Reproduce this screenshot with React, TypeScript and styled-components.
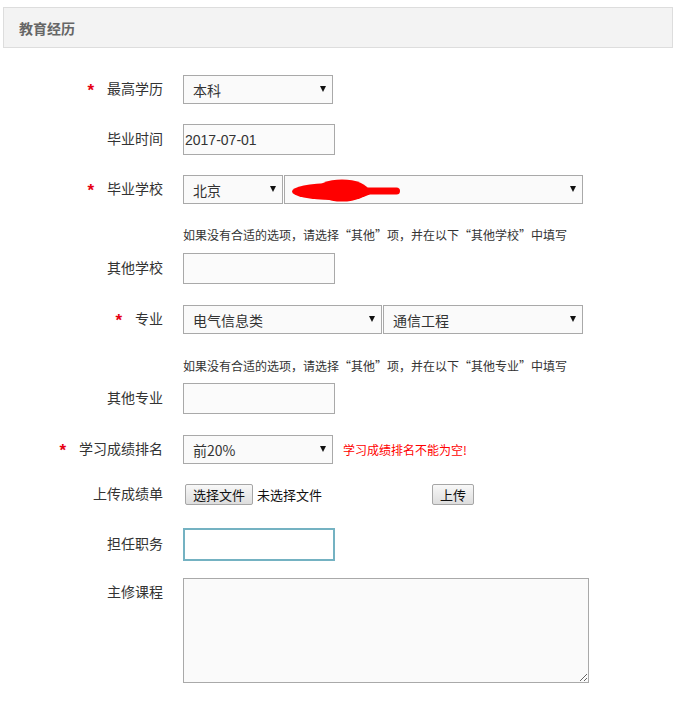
import React from "react";
import styled, { createGlobalStyle } from "styled-components";

const GlobalStyle = createGlobalStyle`
  html, body {
    margin: 0;
    padding: 0;
    background: #ffffff;
  }
  body {
    font-family: "Noto Sans CJK SC", "Liberation Sans", sans-serif;
    color: #333333;
  }
`;

const Page = styled.div`
  width: 679px;
  padding: 7px 6px 20px 3px;
  box-sizing: border-box;
`;

const Header = styled.div`
  height: 41px;
  box-sizing: border-box;
  border: 1px solid #dddddd;
  background: #f3f3f3;
  display: flex;
  align-items: center;
  padding-left: 15px;
`;

const Title = styled.h3`
  margin: 0;
  font-size: 14px;
  font-weight: bold;
  color: #666666;
`;

const Form = styled.div`
  display: flex;
  flex-flow: column;
  padding-top: 27px;
`;

const Row = styled.div<{ $mt?: number; $top?: boolean }>`
  display: grid;
  grid-template-columns: 160px 1fr;
  column-gap: 20px;
  align-items: ${({ $top }) => ($top ? "start" : "center")};
  margin-top: ${({ $mt }) => ($mt ?? 20)}px;
`;

const Label = styled.div<{ $pt?: number }>`
  display: flex;
  justify-content: flex-end;
  align-items: center;
  font-size: 14px;
  line-height: 16px;
  color: #333333;
  padding-top: ${({ $pt }) => $pt ?? 0}px;
  padding-bottom: 3px;
`;

const Star = styled.span`
  color: #e60012;
  font-family: "Liberation Sans", sans-serif;
  font-weight: bold;
  font-size: 17px;
  line-height: 10px;
  height: 10px;
  padding-top: 6px;
  margin-right: 13px;
`;

const Field = styled.div<{ $gap?: number }>`
  display: flex;
  align-items: center;
  gap: ${({ $gap }) => $gap ?? 0}px;
`;

const SelectBox = styled.div<{ $w: number }>`
  position: relative;
  width: ${({ $w }) => $w}px;
  height: 29px;
`;

const Select = styled.select`
  appearance: none;
  -webkit-appearance: none;
  width: 100%;
  height: 100%;
  box-sizing: border-box;
  border: 1px solid #a9a9a9;
  border-radius: 0;
  background: #fafafa;
  padding: 0 20px 0 9px;
  font-family: "Noto Sans CJK SC", sans-serif;
  font-size: 14px;
  color: #333333;
  outline: none;
`;

const Arrow = styled.svg`
  position: absolute;
  right: 7px;
  top: 11px;
  width: 6px;
  height: 6px;
  pointer-events: none;
`;

const Redact = styled.svg`
  position: absolute;
  left: 8px;
  top: 4px;
  width: 110px;
  height: 24px;
  pointer-events: none;
`;

const TextInput = styled.input<{ $focus?: boolean }>`
  width: 152px;
  height: ${({ $focus }) => ($focus ? 33 : 31)}px;
  box-sizing: border-box;
  border: ${({ $focus }) => ($focus ? "2px solid #74b2c2" : "1px solid #a9a9a9")};
  background: ${({ $focus }) => ($focus ? "#ffffff" : "#fbfbfb")};
  padding: 0 1px;
  font-family: "Liberation Sans", sans-serif;
  font-size: 14px;
  color: #333333;
  outline: none;
`;

const Hint = styled.div`
  font-size: 12px;
  line-height: 18px;
  color: #333333;
  white-space: nowrap;
`;

const ErrorText = styled.span`
  margin-left: 10px;
  font-size: 12px;
  color: #ff0000;
`;

const FileField = styled.div`
  width: 247px;
  display: flex;
  align-items: center;
  gap: 4px;
  padding-left: 2px;
`;

const Button = styled.button`
  height: 21px;
  box-sizing: border-box;
  padding: 0 7px;
  border: 1px solid #a6a6a6;
  border-radius: 2px;
  background: linear-gradient(#f8f8f8, #dddddd);
  font-family: "Noto Sans CJK SC", sans-serif;
  font-size: 13px;
  line-height: 19px;
  color: #111111;
`;

const FileName = styled.span`
  font-size: 13px;
  color: #111111;
`;

const TextArea = styled.textarea`
  width: 406px;
  height: 105px;
  box-sizing: border-box;
  border: 1px solid #a9a9a9;
  background: #fafafa;
  font-family: "Noto Sans CJK SC", sans-serif;
  font-size: 14px;
  outline: none;
`;

const Caret = () => (
  <Arrow viewBox="0 0 6 6">
    <polygon points="0,0 6,0 3,6" fill="#111" />
  </Arrow>
);

const Dropdown = ({ w, options, children }: { w: number; options: string[]; children?: React.ReactNode }) => (
  <SelectBox $w={w}>
    <Select defaultValue={options[0]}>
      {options.map((o) => (
        <option key={o} value={o}>
          {o}
        </option>
      ))}
    </Select>
    <Caret />
    {children}
  </SelectBox>
);

const FormLabel = ({ text, required, pt }: { text: string; required?: boolean; pt?: number }) => (
  <Label $pt={pt}>
    {required && <Star>*</Star>}
    {text}
  </Label>
);

const App = () => {
  return (
    <>
      <GlobalStyle />
      <Page>
        <Header>
          <Title>教育经历</Title>
        </Header>
        <Form>
          <Row $mt={0}>
            <FormLabel text="最高学历" required />
            <Field>
              <Dropdown w={150} options={["本科", "硕士", "博士"]} />
            </Field>
          </Row>
          <Row>
            <FormLabel text="毕业时间" />
            <Field>
              <TextInput defaultValue="2017-07-01" />
            </Field>
          </Row>
          <Row>
            <FormLabel text="毕业学校" required />
            <Field $gap={1}>
              <Dropdown w={100} options={["北京", "上海"]} />
              <Dropdown w={299} options={[" "]}>
                <Redact viewBox="0 0 110 24">
                  <ellipse cx="40" cy="12.5" rx="40" ry="8.5" fill="#ff0000" />
                  <ellipse cx="50" cy="11.5" rx="26" ry="11" fill="#ff0000" />
                  <rect x="66" y="8.5" width="42" height="7" rx="3.5" fill="#ff0000" />
                </Redact>
              </Dropdown>
            </Field>
          </Row>
          <Row $mt={22}>
            <div />
            <Hint>如果没有合适的选项，请选择“其他”项，并在以下“其他学校”中填写</Hint>
          </Row>
          <Row $mt={9}>
            <FormLabel text="其他学校" />
            <Field>
              <TextInput />
            </Field>
          </Row>
          <Row $mt={21}>
            <FormLabel text="专业" required />
            <Field $gap={1}>
              <Dropdown w={199} options={["电气信息类"]} />
              <Dropdown w={200} options={["通信工程"]} />
            </Field>
          </Row>
          <Row $mt={23}>
            <div />
            <Hint>如果没有合适的选项，请选择“其他”项，并在以下“其他专业”中填写</Hint>
          </Row>
          <Row $mt={8}>
            <FormLabel text="其他专业" />
            <Field>
              <TextInput />
            </Field>
          </Row>
          <Row $mt={21}>
            <FormLabel text="学习成绩排名" required />
            <Field>
              <Dropdown w={150} options={["前20%", "前50%"]} />
              <ErrorText>学习成绩排名不能为空!</ErrorText>
            </Field>
          </Row>
          <Row>
            <FormLabel text="上传成绩单" />
            <Field>
              <FileField>
                <Button>选择文件</Button>
                <FileName>未选择文件</FileName>
              </FileField>
              <Button>上传</Button>
            </Field>
          </Row>
          <Row $mt={23}>
            <FormLabel text="担任职务" />
            <Field>
              <TextInput $focus />
            </Field>
          </Row>
          <Row $mt={17} $top>
            <FormLabel text="主修课程" pt={5} />
            <Field>
              <TextArea />
            </Field>
          </Row>
        </Form>
      </Page>
    </>
  );
};

export default App;
